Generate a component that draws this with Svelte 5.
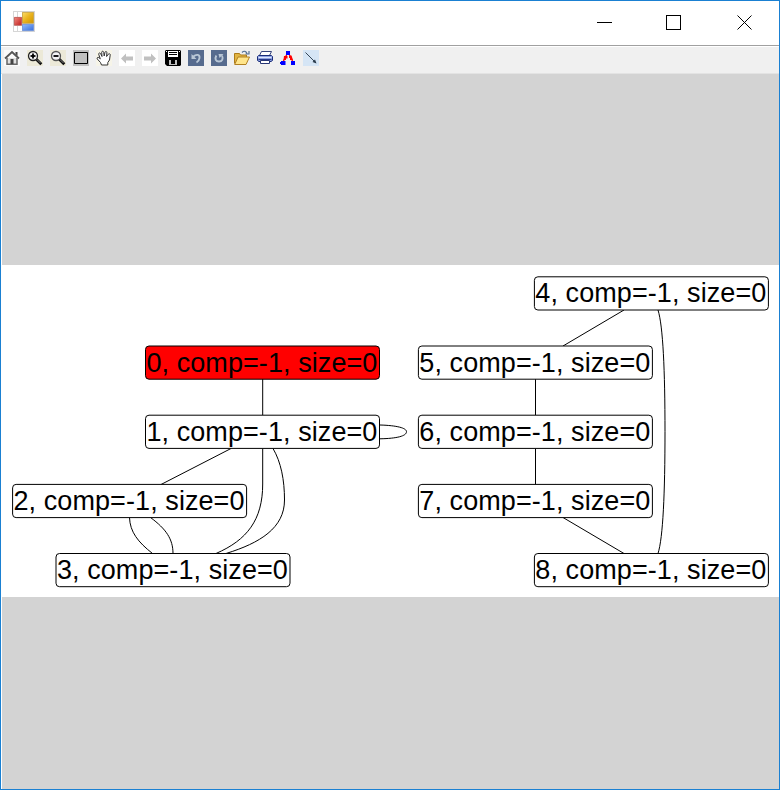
<script>
  const nodes = [
    { id: 0, x: 145.5, y: 346, fill: '#ff0000' },
    { id: 1, x: 145.5, y: 415.2 },
    { id: 2, x: 12.6, y: 484.4 },
    { id: 3, x: 56, y: 553.5 },
    { id: 4, x: 534.4, y: 276.8 },
    { id: 5, x: 418.4, y: 346 },
    { id: 6, x: 418.4, y: 415.2 },
    { id: 7, x: 418.4, y: 484.4 },
    { id: 8, x: 534.4, y: 553.5 }
  ];
  const edges = [
    'M262.7 379V415',
    'M231 448.5L161 484.5',
    'M262.7 448.5V484C262.7 520 247 540 216 553.5',
    'M273 448.5C281 462 284.5 480 284.5 500C284.5 528 260 543 226 553.5',
    'M129.5 517.5C130 532 138 542 152.5 553.5',
    'M150.5 517.5C166 529 173 539 173 553.5',
    'M380 425C397 425.5 406.5 428 406.5 431.7C406.5 436 397 438.5 380 438.8',
    'M624 310L563 346',
    'M535.5 379V415',
    'M535.5 448.5V484.5',
    'M563 517.5L624 553.5',
    'M658 310C663 326 665 370 665 431.7C665 493 663 538 658 553.5'
  ];
  const tools = ['home', 'zoom in', 'zoom out', 'window', 'pan', 'back', 'forward', 'save', 'undo', 'redo', 'open', 'print', 'layout', 'edge'];
</script>

<div class="window">
  <header>
    <svg class="logo" width="22" height="21" viewBox="0 0 22 21">
      <defs>
        <linearGradient id="gold" x2="1" y2="1"><stop stop-color="#fbdc6a" /><stop offset=".5" stop-color="#e9b21c" /><stop offset="1" stop-color="#cf9300" /></linearGradient>
        <linearGradient id="blue" x2="1" y2="1"><stop stop-color="#8fbcff" /><stop offset="1" stop-color="#3a6edc" /></linearGradient>
        <linearGradient id="red" x2="1" y2="1"><stop stop-color="#f08a80" /><stop offset="1" stop-color="#c01c1c" /></linearGradient>
      </defs>
      <path fill="#d6d6d6" d="M0 0h22v21H0z" />
      <path fill="#fff" d="M1 1h3v5H1zM5 1h4v5H5zM1 15h3v5H1zM5 15h4v5H5z" />
      <path fill="url(#gold)" stroke="#c9a23c" stroke-width=".8" d="M9.500 1.400h11v10.800h-11z" />
      <path fill="url(#blue)" stroke="#6c92dc" stroke-width=".8" d="M9.500 13.400h11v6.200h-11z" />
      <path fill="url(#red)" stroke="#c0524c" stroke-width=".8" d="M1.400 6.400h7.200v7.800H1.400z" />
    </svg>
    <svg class="controls" width="156" height="17" viewBox="0 0 156 17" fill="none" stroke="#000">
      <path d="M0 8.500h15M69.500 1.500h14v14h-14z" shape-rendering="crispEdges" />
      <path d="M140.500 1.500l14 14M154.500 1.500l-14 14" />
    </svg>
  </header>

  <nav>
    {#each tools as tool}
      <svg width="16" height="16" viewBox="0 0 16 16" fill="none">
        {#if tool === 'home'}
          <path fill="#fafafa" d="M0 0h16v16H0z" />
          <path fill="#e0e0e0" stroke="#666" stroke-width="1.500" d="M3 8v6.300h10V8" />
          <path stroke="#555" stroke-width="1.800" d="M1 8.500L8 2l7 6.500" />
          <path fill="#444" d="M6.500 9h3v5h-3zM11.500 2h2v4l-2-2z" />
        {:else if tool === 'zoom in' || tool === 'zoom out'}
          <path fill="#ece9d8" d="M0 0h16v16H0z" />
          <circle cx="6" cy="6" r="4.500" fill="#f4f4f4" stroke={tool === 'zoom in' ? '#222' : '#555'} stroke-width="1.300" />
          <path stroke="#000" stroke-width="1.800" d="M3.500 6h5" />
          {#if tool === 'zoom in'}<path stroke="#000" stroke-width="1.800" d="M6 3.500v5" />{/if}
          <path stroke="#111" stroke-width="2.800" d="M9.300 9.300l5 5" />
          <path stroke="#aaa" stroke-width=".7" d="M10 9.500l3.500 3.500" />
        {:else if tool === 'window'}
          <path fill="#c0c0c0" d="M0 0h16v16H0z" />
          <path stroke="#000" d="M1.500 2.500h13v11h-13z" />
        {:else if tool === 'pan'}
          <path fill="#f6f4e8" d="M0 0h16v16H0z" />
          <path fill="#fff" stroke="#333" stroke-linejoin="round" d="M5.500 15L4.500 12.500 1.300 9C.5 7.700 2 6.700 3 7.700l1.300 1.200L2.700 4.200C2.400 3 4 2.400 4.600 3.600L6 6.500 5.700 2.300c0-1.400 1.800-1.400 2 0L8.200 6l.8-3.700c.4-1.300 2-1 1.900.4L10.600 6.500l1.700-2.300c.8-1 2.300-.3 1.900.9L13.500 10l-1.700 2.500V15z" />
        {:else if tool === 'back' || tool === 'forward'}
          <path fill="#fff" d="M0 0h16v16H0z" />
          <path fill="#c0c0c0" d={tool === 'back' ? 'M2 8.500l5-5v3h7v4H7v3z' : 'M14 8.500l-5-5v3H2v4h7v3z'} />
        {:else if tool === 'save'}
          <path fill="#000" d="M1 0h14l1 1v14l-1 1H2l-2-2V1z" />
          <path fill="#fff" d="M3 1h10v6H3zM1 1h1v1H1zM14 1h1v1h-1z" />
          <path stroke="#000" d="M4 2.500h8M4 4.500h8" />
          <path fill="#c0c0c0" d="M4 10h8v5H4z" />
          <path fill="#000" d="M6 10h4v4H6z" />
        {:else if tool === 'undo'}
          <path fill="#566b8e" d="M0 0h16v16H0z" />
          <path stroke="#b9c7d6" stroke-width="1.800" d="M5 6.800c3.500-3 7-2.300 6.500 1.200-.3 2.300-1.300 3.500-3 4.500" />
          <path fill="#b9c7d6" d="M3.500 4v5h5z" />
        {:else if tool === 'redo'}
          <path fill="#566b8e" d="M0 0h16v16H0z" />
          <path stroke="#b9c7d6" stroke-width="1.900" d="M5.300 5.500C3.500 9 4.800 11.500 8 11.500s4.500-2.500 3-6" />
          <path fill="#b9c7d6" d="M7.500 4h5l-4 4z" />
        {:else if tool === 'open'}
          <path fill="#e1b442" stroke="#ad7b18" d="M.5 13.500v-10h5l1 1.500h6v2" />
          <path fill="#ffe58b" stroke="#b18022" d="M.7 14.500L4 7h11.500L12 14.500z" />
          <path stroke="#536f93" stroke-width="1.200" d="M8 2.500c2-2 4-1.500 5 1M15 1v3h-3.500" />
        {:else if tool === 'print'}
          <path fill="#fff" stroke="#35437c" d="M4.500 1.500h10l-2 4h-10z" />
          <path fill="#8fa3e2" stroke="#1a2c78" d="M1.500 5.500h13l1 1v4l-1.500 1H2l-1.500-1v-4z" />
          <path stroke="#dfe7ff" d="M1.500 7.500h13" />
          <path stroke="#26388a" d="M1.500 9.500h13" />
          <path fill="#fff" stroke="#263675" d="M3.500 10.500h9v3h-9z" />
        {:else if tool === 'layout'}
          <path stroke="#f00" stroke-width="1.300" d="M7 4l-4 8M9 4l4 8" />
          <path fill="#f00" d="M4 6h3.500v2.500H6V10H3.500zM9 5.500h2.500L13 10h-3V8H9z" />
          <path fill="#00f" d="M6 1h4v4H6zM1 11h4.500v4H1zM11 11h4v4h-4zM0 12h1v2H0z" />
        {:else}
          <path fill="#d5e5f5" d="M0 0h16v16H0z" />
          <path stroke="#344657" d="M2.500 2.500L12 12" />
          <path fill="#263747" d="M13.500 13.500l-1.500-4-2.500 2.500z" />
        {/if}
      </svg>
    {/each}
  </nav>

  <main>
    <div class="paper">
      <svg class="graph" width="777" height="332" viewBox="2 265 777 332">
        <g fill="none" stroke="#000" stroke-width="1">
          {#each edges as d}<path {d} />{/each}
        </g>
        {#each nodes as node}
          <rect x={node.x} y={node.y} width="234" height="33.200" rx="3.500" fill={node.fill ?? '#fff'} stroke="#000" />
          <text x={node.x + 0.9} y={node.y + 25.5} textLength="231">{node.id}, comp=-1, size=0</text>
        {/each}
      </svg>
    </div>
  </main>
</div>

<style>
  .window {
    box-sizing: border-box;
    width: 780px;
    height: 790px;
    display: flex;
    flex-direction: column;
    border: 1px solid #1a80d2;
    background: #fff;
    overflow: hidden;
  }
  svg { display: block; flex: none; }
  header {
    box-sizing: border-box;
    height: 45px;
    display: flex;
    align-items: flex-start;
    justify-content: space-between;
    padding: 10px 26px 0 12px;
    border-bottom: 1px solid #a0a0a0;
  }
  .controls { margin-top: 3px; }
  nav {
    box-sizing: border-box;
    height: 27px;
    margin-top: 1px;
    display: flex;
    gap: 7px;
    padding: 3px 0 0 3px;
    background: #f0f0f0;
    border-bottom: 1px solid #e3e3e3;
  }
  main {
    flex: 1;
    display: flex;
    flex-direction: column;
    margin-left: 1px;
    padding-top: 191px;
    background: #d3d3d3;
  }
  .paper { height: 332px; background: #fff; }
  text {
    font-family: "Liberation Sans", Arial, sans-serif;
    font-size: 27px;
    fill: #000;
  }
</style>
